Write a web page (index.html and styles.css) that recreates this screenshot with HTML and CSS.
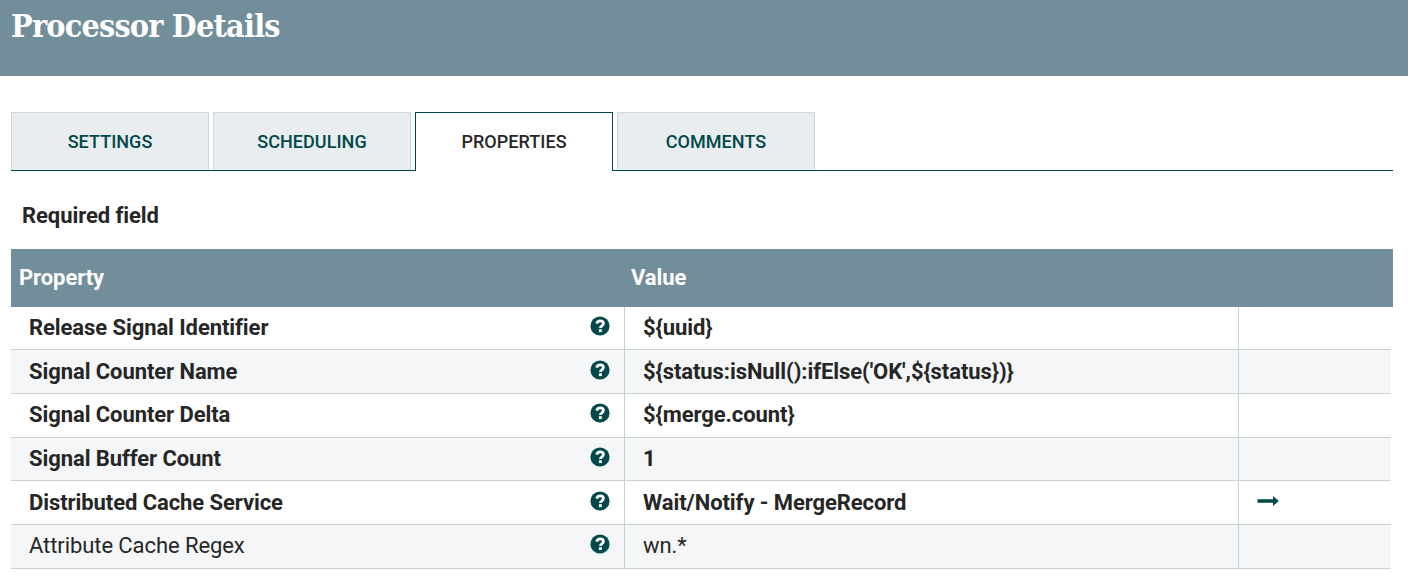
FILE: index.html
```html
<!DOCTYPE html>
<html lang="en">
<head>
<meta charset="utf-8">
<title>Processor Details</title>
<link rel="stylesheet" href="styles.css">
</head>
<body>
<svg class="sprite" aria-hidden="true">
  <symbol id="help" viewBox="0 0 20 20">
    <circle cx="10" cy="10" r="9.600" fill="#004849"/>
    <path d="M6.700 7.600C7.200 5.700 8.300 4.900 10.100 4.900c2 0 3.300 1.100 3.300 2.700 0 2.400-3 2.200-3 4.500" fill="none" stroke="#fff" stroke-width="2.800"/>
    <rect x="8.900" y="13.200" width="2.900" height="2.900" fill="#fff"/>
  </symbol>
</svg>
<header class="dialog-header"><h1 class="title">Processor Details</h1></header>
<main class="content">
  <nav class="tabs">
    <div class="tab">SETTINGS</div>
    <div class="tab">SCHEDULING</div>
    <div class="tab selected">PROPERTIES</div>
    <div class="tab">COMMENTS</div>
  </nav>
  <div class="required">Required field</div>
  <section class="table">
    <div class="table-header"><span class="col-name">Property</span><span>Value</span></div>
    <div class="rows">
      <div class="row"><div class="cell name"><span>Release Signal Identifier</span><svg class="help"><use href="#help"/></svg></div><div class="cell value"><span>${uuid}</span></div><div class="cell action"></div></div>
      <div class="row"><div class="cell name"><span>Signal Counter Name</span><svg class="help"><use href="#help"/></svg></div><div class="cell value"><span>${status:isNull():ifElse('OK',${status})}</span></div><div class="cell action"></div></div>
      <div class="row"><div class="cell name"><span>Signal Counter Delta</span><svg class="help"><use href="#help"/></svg></div><div class="cell value"><span>${merge.count}</span></div><div class="cell action"></div></div>
      <div class="row"><div class="cell name"><span>Signal Buffer Count</span><svg class="help"><use href="#help"/></svg></div><div class="cell value"><span>1</span></div><div class="cell action"></div></div>
      <div class="row"><div class="cell name"><span>Distributed Cache Service</span><svg class="help"><use href="#help"/></svg></div><div class="cell value"><span>Wait/Notify - MergeRecord</span></div><div class="cell action"><svg class="arrow" viewBox="0 0 22 10"><path d="M0.500 3.200H16V0L21.800 5 16 10V6.800H0.500Z" fill="#004849"/></svg></div></div>
      <div class="row optional"><div class="cell name"><span>Attribute Cache Regex</span><svg class="help"><use href="#help"/></svg></div><div class="cell value"><span>wn.*</span></div><div class="cell action"></div></div>
    </div>
  </section>
</main>
</body>
</html>
```
FILE: styles.css
```css
* { box-sizing: border-box; }
body { margin: 0; height: 578px; overflow: hidden; background: #fff; color: #262626; font-family: Roboto, sans-serif; }
.sprite { display: none; }
.dialog-header { height: 76px; padding: 6px 11px; background: #728e9b; }
.title { margin: 0; color: #fff; font: bold 32px/40px "Roboto Slab", "DejaVu Serif Condensed", "DejaVu Serif", serif; font-stretch: condensed; letter-spacing: -0.780px; white-space: nowrap; }
.content { padding: 36px 15px 0 11px; }
.tabs { display: flex; gap: 4px; height: 59px; border-bottom: 1px solid #004849; }
.tab { width: 198px; height: 58px; border: 1px solid #ccdadb; border-bottom: 0; background: #e9edf0; color: #004849; font-size: 18px; font-weight: 500; line-height: 58px; letter-spacing: 0.050px; text-align: center; }
.tab.selected { height: 59px; border-color: #004849; background: #fff; color: #262626; }
.required { height: 78px; padding: 30px 0 0 11px; font-size: 22px; font-weight: bold; line-height: 30px; letter-spacing: -0.080px; }
.table { font-size: 22px; font-weight: bold; letter-spacing: -0.080px; }
.table-header { display: flex; height: 58px; padding-left: 8px; background: #728e9b; color: #fff; line-height: 58px; }
.col-name { width: 612px; }
.rows { width: 1380px; }
.row { display: grid; grid-template-columns: 614px 614px 152px; height: 44px; border-bottom: 1px solid #c7d2d7; }
.row:nth-child(1), .row:nth-child(4) { height: 43px; }
.row:nth-child(even) { background: #f4f6f7; }
.cell { display: flex; align-items: center; border-right: 1px solid #c7d2d7; line-height: 42px; }
.row:nth-child(3n) .cell { padding-bottom: 2px; line-height: 40px; }
.name { justify-content: space-between; padding: 0 14px 0 18px; }
.value { padding-left: 18px; }
.action { padding-left: 18px; border-right: 0; }
.optional { font-weight: 400; }
.help { width: 20px; height: 20px; margin-top: -3px; }
.row:nth-child(3n + 1) .help { margin-top: -4px; }
.arrow { width: 22px; height: 10px; margin-top: -3px; }
```
